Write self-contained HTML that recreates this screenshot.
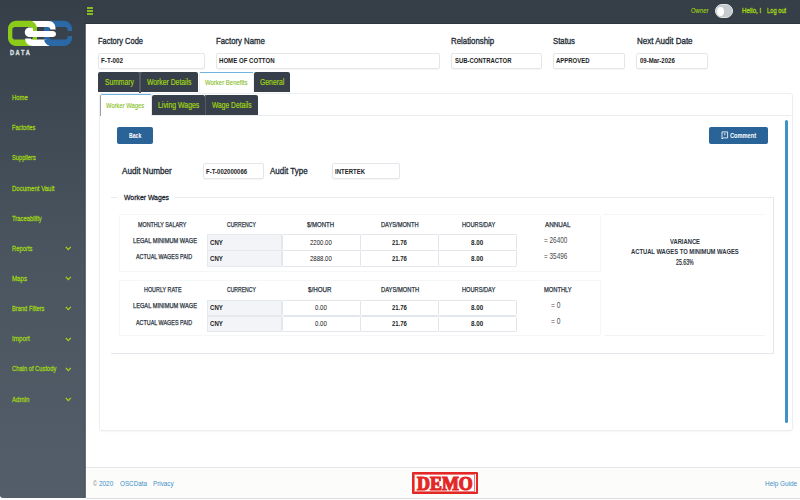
<!DOCTYPE html>
<html><head><meta charset="utf-8"><style>
html,body{margin:0;padding:0;width:800px;height:500px;overflow:hidden;background:#fff;position:relative}
.t{position:absolute;white-space:nowrap;line-height:1;font-family:"Liberation Sans",sans-serif;transform-origin:0 0}
</style></head><body>
<div style="position:absolute;left:0px;top:0px;width:86px;height:498px;box-sizing:border-box;background:linear-gradient(#363f48 0%,#3b4550 14%,#4a5560 52%,#535e6a 100%);border-right:1px solid #6a727a;border-bottom-left-radius:3px"></div>
<div style="position:absolute;left:84px;top:24px;width:1px;height:474px;box-sizing:border-box;background:rgba(0,0,0,0.07)"></div>
<div style="position:absolute;left:84px;top:0px;width:716px;height:24px;box-sizing:border-box;background:#363f48;border-bottom:1px solid #2e363e"></div>
<div style="position:absolute;left:86.8px;top:7.2px;width:6.400000000000006px;height:1.7000000000000002px;box-sizing:border-box;background:#86bb22"></div>
<div style="position:absolute;left:86.8px;top:10.3px;width:6.400000000000006px;height:1.6999999999999993px;box-sizing:border-box;background:#86bb22"></div>
<div style="position:absolute;left:86.8px;top:13.4px;width:6.400000000000006px;height:1.6999999999999993px;box-sizing:border-box;background:#86bb22"></div>
<svg style="position:absolute;left:0;top:0" width="86" height="60" viewBox="0 0 86 60">
<path fill-rule="evenodd" fill="#8dcb1a" d="M16 20.8 H29 C33.5 20.8 37 24.5 37 29 V37.8 C37 42.3 33.5 46 29 46 H16 C11.5 46 8 42.3 8 37.8 V29 C8 24.5 11.5 20.8 16 20.8 Z M15 27 H30.5 C32 27 33 28 33 29.5 V37 C33 38.5 32 39.6 30.5 39.6 H15 C13.5 39.6 12.3 38.5 12.3 37 V29.5 C12.3 28 13.5 27 15 27 Z"/>
<path fill-rule="evenodd" fill="#2a69a5" d="M52 20.8 H64 C68.5 20.8 72 24.5 72 29 V31 H67.6 V29.5 C67.6 28 66.6 27 65 27 H52 C50.5 27 49.5 28 49.5 29.5 V37 C49.5 38.5 50.5 39.6 52 39.6 H65 C66.6 39.6 67.6 38.5 67.6 37 V36 H72 V37.8 C72 42.3 68.5 46 64 46 H52 C47.5 46 44 42.3 44 37.8 V29 C44 24.5 47.5 20.8 52 20.8 Z"/>
<path fill="#ffffff" d="M30 27.4 H33 V31 H52.5 C54.6 31 56 32.2 56 34 C56 35.8 54.6 37 52.5 37 H30 C27 37 24.8 35 24.8 32.2 C24.8 29.4 27 27.4 30 27.4 Z"/>
<path fill="#ffffff" d="M32 21 H48.5 C53 21 55.6 24 55.6 29.4 H50.2 C50.2 27.8 49.4 27 47.6 27 H33.5 Z"/>
<path fill="#ffffff" d="M25.2 38.6 H30.8 C30.8 39.2 31.4 39.6 32.4 39.6 H46.5 L49.5 46 H33 C28.2 46 25.2 43.2 25.2 38.6 Z"/>
<path fill="#8dcb1a" d="M29 20.8 C30.5 20.8 31.5 21 32.2 21.3 C35 22.6 37 25.4 37 29 V31 H33 V29.5 C33 28 32 27 30.5 27 H29 Z"/>
<path fill="#8dcb1a" d="M33 37 V37.8 C33 38.8 32.6 39.4 32 39.6 H36.5 C36.9 38.8 37 38.2 37 37.8 V37 Z" opacity="0.9"/>
<path fill="#2a69a5" d="M44.3 39.6 H49.6 C50.2 40 51 40 52 40 V46 C48.8 46 46 44.5 44.5 41.5 Z"/>
</svg>
<div class="t" style="left:10.00px;top:49.33px;font-size:7.5px;font-weight:bold;color:#dfe2e4;transform:scaleX(0.754);-webkit-text-stroke:0.35px #dfe2e4;">D A T A</div>
<div class="t" style="left:690.50px;top:7.25px;font-size:8px;font-weight:normal;color:#a0d514;transform:scaleX(0.743);-webkit-text-stroke:0.12px #a0d514;">Owner</div>
<div style="position:absolute;left:714.6px;top:3.7px;width:18.299999999999955px;height:14.8px;box-sizing:border-box;background:#c6cbce;border:1px solid #e3e6e8;border-radius:7.5px"></div>
<div style="position:absolute;left:716.5px;top:6.5px;width:7.7000000000000455px;height:9.4px;box-sizing:border-box;background:#fff;border-radius:50%"></div>
<div class="t" style="left:741.80px;top:7.25px;font-size:8px;font-weight:normal;color:#a0d514;transform:scaleX(0.772);-webkit-text-stroke:0.35px #a0d514;">Hello, I</div>
<div class="t" style="left:767.00px;top:7.25px;font-size:8px;font-weight:normal;color:#a0d514;transform:scaleX(0.720);-webkit-text-stroke:0.35px #a0d514;">Log out</div>
<div class="t" style="left:11.60px;top:94.05px;font-size:8px;font-weight:normal;color:#a0d514;transform:scaleX(0.740);-webkit-text-stroke:0.28px #a0d514;">Home</div>
<div class="t" style="left:11.60px;top:124.20px;font-size:8px;font-weight:normal;color:#a0d514;transform:scaleX(0.706);-webkit-text-stroke:0.28px #a0d514;">Factories</div>
<div class="t" style="left:11.60px;top:154.35px;font-size:8px;font-weight:normal;color:#a0d514;transform:scaleX(0.713);-webkit-text-stroke:0.28px #a0d514;">Suppliers</div>
<div class="t" style="left:11.60px;top:184.50px;font-size:8px;font-weight:normal;color:#a0d514;transform:scaleX(0.753);-webkit-text-stroke:0.28px #a0d514;">Document Vault</div>
<div class="t" style="left:11.60px;top:214.65px;font-size:8px;font-weight:normal;color:#a0d514;transform:scaleX(0.732);-webkit-text-stroke:0.28px #a0d514;">Traceability</div>
<div class="t" style="left:11.60px;top:244.80px;font-size:8px;font-weight:normal;color:#a0d514;transform:scaleX(0.729);-webkit-text-stroke:0.28px #a0d514;">Reports</div>
<svg style="position:absolute;left:65px;top:246.05px" width="7" height="5" viewBox="0 0 7 5"><path d="M0.8 0.9 L3.3 3.6 L5.8 0.9" fill="none" stroke="#a0d514" stroke-width="1.3"/></svg>
<div class="t" style="left:11.60px;top:274.95px;font-size:8px;font-weight:normal;color:#a0d514;transform:scaleX(0.767);-webkit-text-stroke:0.28px #a0d514;">Maps</div>
<svg style="position:absolute;left:65px;top:276.20px" width="7" height="5" viewBox="0 0 7 5"><path d="M0.8 0.9 L3.3 3.6 L5.8 0.9" fill="none" stroke="#a0d514" stroke-width="1.3"/></svg>
<div class="t" style="left:11.60px;top:305.10px;font-size:8px;font-weight:normal;color:#a0d514;transform:scaleX(0.716);-webkit-text-stroke:0.28px #a0d514;">Brand Filters</div>
<svg style="position:absolute;left:65px;top:306.35px" width="7" height="5" viewBox="0 0 7 5"><path d="M0.8 0.9 L3.3 3.6 L5.8 0.9" fill="none" stroke="#a0d514" stroke-width="1.3"/></svg>
<div class="t" style="left:11.60px;top:335.25px;font-size:8px;font-weight:normal;color:#a0d514;transform:scaleX(0.785);-webkit-text-stroke:0.28px #a0d514;">Import</div>
<svg style="position:absolute;left:65px;top:336.50px" width="7" height="5" viewBox="0 0 7 5"><path d="M0.8 0.9 L3.3 3.6 L5.8 0.9" fill="none" stroke="#a0d514" stroke-width="1.3"/></svg>
<div class="t" style="left:11.60px;top:365.40px;font-size:8px;font-weight:normal;color:#a0d514;transform:scaleX(0.722);-webkit-text-stroke:0.28px #a0d514;">Chain of Custody</div>
<svg style="position:absolute;left:65px;top:366.65px" width="7" height="5" viewBox="0 0 7 5"><path d="M0.8 0.9 L3.3 3.6 L5.8 0.9" fill="none" stroke="#a0d514" stroke-width="1.3"/></svg>
<div class="t" style="left:11.60px;top:395.55px;font-size:8px;font-weight:normal;color:#a0d514;transform:scaleX(0.767);-webkit-text-stroke:0.28px #a0d514;">Admin</div>
<svg style="position:absolute;left:65px;top:396.80px" width="7" height="5" viewBox="0 0 7 5"><path d="M0.8 0.9 L3.3 3.6 L5.8 0.9" fill="none" stroke="#a0d514" stroke-width="1.3"/></svg>
<div class="t" style="left:98.40px;top:36.99px;font-size:9.3px;font-weight:normal;color:#212b35;transform:scaleX(0.806);-webkit-text-stroke:0.33px #212b35;">Factory Code</div>
<div class="t" style="left:216.00px;top:36.99px;font-size:9.3px;font-weight:normal;color:#212b35;transform:scaleX(0.837);-webkit-text-stroke:0.33px #212b35;">Factory Name</div>
<div class="t" style="left:451.30px;top:36.99px;font-size:9.3px;font-weight:normal;color:#212b35;transform:scaleX(0.844);-webkit-text-stroke:0.33px #212b35;">Relationship</div>
<div class="t" style="left:553.00px;top:36.99px;font-size:9.3px;font-weight:normal;color:#212b35;transform:scaleX(0.834);-webkit-text-stroke:0.33px #212b35;">Status</div>
<div class="t" style="left:636.90px;top:36.99px;font-size:9.3px;font-weight:normal;color:#212b35;transform:scaleX(0.860);-webkit-text-stroke:0.33px #212b35;">Next Audit Date</div>
<div style="position:absolute;left:98px;top:52.5px;width:107px;height:16.0px;box-sizing:border-box;background:#fff;border:1px solid #e3e6ea;border-radius:2px;box-shadow:0 1px 1px rgba(0,0,0,.04)"></div>
<div style="position:absolute;left:215.6px;top:52.5px;width:224.4px;height:16.0px;box-sizing:border-box;background:#fff;border:1px solid #e3e6ea;border-radius:2px;box-shadow:0 1px 1px rgba(0,0,0,.04)"></div>
<div style="position:absolute;left:451.3px;top:52.5px;width:90.49999999999994px;height:16.0px;box-sizing:border-box;background:#fff;border:1px solid #e3e6ea;border-radius:2px;box-shadow:0 1px 1px rgba(0,0,0,.04)"></div>
<div style="position:absolute;left:553.3px;top:52.5px;width:71.70000000000005px;height:16.0px;box-sizing:border-box;background:#fff;border:1px solid #e3e6ea;border-radius:2px;box-shadow:0 1px 1px rgba(0,0,0,.04)"></div>
<div style="position:absolute;left:636.3px;top:52.5px;width:72.0px;height:16.0px;box-sizing:border-box;background:#fff;border:1px solid #e3e6ea;border-radius:2px;box-shadow:0 1px 1px rgba(0,0,0,.04)"></div>
<div class="t" style="left:100.60px;top:57.05px;font-size:7px;font-weight:bold;color:#222;transform:scaleX(0.894);">F-T-002</div>
<div class="t" style="left:218.80px;top:57.05px;font-size:7px;font-weight:bold;color:#222;transform:scaleX(0.868);">HOME OF COTTON</div>
<div class="t" style="left:455.00px;top:57.05px;font-size:7px;font-weight:bold;color:#222;transform:scaleX(0.845);">SUB-CONTRACTOR</div>
<div class="t" style="left:556.00px;top:57.05px;font-size:7px;font-weight:bold;color:#222;transform:scaleX(0.852);">APPROVED</div>
<div class="t" style="left:639.80px;top:57.05px;font-size:7px;font-weight:bold;color:#222;transform:scaleX(0.858);">09-Mar-2026</div>
<div style="position:absolute;left:98px;top:72px;width:41.5px;height:20px;box-sizing:border-box;background:#37404a;border-radius:2px 2px 0 0"></div>
<div class="t" style="left:105.00px;top:78.00px;font-size:8.3px;font-weight:normal;color:#a0d514;transform:scaleX(0.811);-webkit-text-stroke:0.18px #a0d514;">Summary</div>
<div style="position:absolute;left:139.5px;top:72px;width:58.30000000000001px;height:20px;box-sizing:border-box;background:#37404a;border-radius:2px 2px 0 0"></div>
<div class="t" style="left:146.80px;top:78.00px;font-size:8.3px;font-weight:normal;color:#a0d514;transform:scaleX(0.820);-webkit-text-stroke:0.18px #a0d514;">Worker Details</div>
<div style="position:absolute;left:198.5px;top:72px;width:55.400000000000006px;height:21px;box-sizing:border-box;background:#fff;border-top:1.2px solid #6fb3de;border-left:1px solid #f0f2f4;border-right:1px solid #f0f2f4;border-radius:2px 2px 0 0"></div>
<div class="t" style="left:204.50px;top:78.65px;font-size:7.8px;font-weight:normal;color:#86be1a;transform:scaleX(0.768);-webkit-text-stroke:0.12px #86be1a;">Worker Benefits</div>
<div style="position:absolute;left:254.3px;top:72px;width:35.69999999999999px;height:20px;box-sizing:border-box;background:#37404a;border-radius:2px 2px 0 0"></div>
<div class="t" style="left:260.00px;top:78.00px;font-size:8.3px;font-weight:normal;color:#a0d514;transform:scaleX(0.822);-webkit-text-stroke:0.18px #a0d514;">General</div>
<div style="position:absolute;left:139.3px;top:72px;width:1.299999999999983px;height:20.5px;box-sizing:border-box;background:#555b62"></div>
<div style="position:absolute;left:99px;top:115px;width:692px;height:1px;box-sizing:border-box;background:#e9ecef"></div>
<div style="position:absolute;left:100px;top:94.3px;width:51.5px;height:21.700000000000003px;box-sizing:border-box;background:#fff;border-top:1px solid #6fb3de;border-left:1px solid #9aa0a6;border-right:1px solid #e6eaee;border-radius:2px 2px 0 0"></div>
<div class="t" style="left:106.30px;top:101.85px;font-size:7.8px;font-weight:normal;color:#86be1a;transform:scaleX(0.747);-webkit-text-stroke:0.12px #86be1a;">Worker Wages</div>
<div style="position:absolute;left:151.5px;top:95px;width:53.5px;height:20px;box-sizing:border-box;background:#37404a;border-radius:2px 2px 0 0"></div>
<div class="t" style="left:157.50px;top:100.39px;font-size:9.5px;font-weight:normal;color:#a0d514;transform:scaleX(0.729);-webkit-text-stroke:0.22px #a0d514;">Living Wages</div>
<div style="position:absolute;left:205px;top:95px;width:53px;height:20px;box-sizing:border-box;background:#37404a;border-radius:2px 2px 0 0"></div>
<div class="t" style="left:211.80px;top:100.39px;font-size:9.5px;font-weight:normal;color:#a0d514;transform:scaleX(0.704);-webkit-text-stroke:0.22px #a0d514;">Wage Details</div>
<div style="position:absolute;left:204.8px;top:95px;width:1.299999999999983px;height:20.299999999999997px;box-sizing:border-box;background:#555b62"></div>
<div style="position:absolute;left:98.5px;top:93px;width:694.0px;height:338px;box-sizing:border-box;border:1px solid #eceef1;border-radius:3px;box-shadow:0 1px 2px rgba(0,0,0,.04)"></div>
<div style="position:absolute;left:784.6px;top:119.5px;width:3.6000000000000227px;height:303.5px;box-sizing:border-box;background:#3e92c8;border-radius:2px"></div>
<div style="position:absolute;left:116.8px;top:127.1px;width:36.2px;height:16.900000000000006px;box-sizing:border-box;background:#2a6398;border-radius:2px"></div>
<div class="t" style="left:128.80px;top:132.01px;font-size:7.5px;font-weight:bold;color:#fff;transform:scaleX(0.685);">Back</div>
<div style="position:absolute;left:708.8px;top:127px;width:59.60000000000002px;height:16.80000000000001px;box-sizing:border-box;background:#2a6398;border-radius:2px"></div>
<div class="t" style="left:729.90px;top:132.01px;font-size:7.5px;font-weight:bold;color:#fff;transform:scaleX(0.755);">Comment</div>
<svg style="position:absolute;left:721px;top:131px" width="8" height="9" viewBox="0 0 8 9"><path d="M1 0.9 H6.6 V6.9 H2 L1 8 Z" fill="none" stroke="#fff" stroke-width="0.85"/><path d="M3.8 1.9 V4.3" stroke="#fff" stroke-width="0.9"/></svg>
<div class="t" style="left:122.20px;top:167.00px;font-size:9.3px;font-weight:normal;color:#212b35;transform:scaleX(0.874);-webkit-text-stroke:0.33px #212b35;">Audit Number</div>
<div class="t" style="left:270.00px;top:167.00px;font-size:9.3px;font-weight:normal;color:#212b35;transform:scaleX(0.859);-webkit-text-stroke:0.33px #212b35;">Audit Type</div>
<div style="position:absolute;left:203.3px;top:163.2px;width:60.39999999999998px;height:16.0px;box-sizing:border-box;background:#fff;border:1px solid #e3e6ea;border-radius:2px;box-shadow:0 1px 1px rgba(0,0,0,.04)"></div>
<div style="position:absolute;left:332.4px;top:163.2px;width:67.20000000000005px;height:16.0px;box-sizing:border-box;background:#fff;border:1px solid #e3e6ea;border-radius:2px;box-shadow:0 1px 1px rgba(0,0,0,.04)"></div>
<div class="t" style="left:206.00px;top:167.85px;font-size:7px;font-weight:bold;color:#222;transform:scaleX(0.860);">F-T-002000066</div>
<div class="t" style="left:335.00px;top:168.16px;font-size:7px;font-weight:bold;color:#222;transform:scaleX(0.857);">INTERTEK</div>
<div style="position:absolute;left:111px;top:197.3px;width:6px;height:1.1999999999999886px;box-sizing:border-box;background:#e6eaed"></div>
<div style="position:absolute;left:175px;top:197.3px;width:599px;height:1.1999999999999886px;box-sizing:border-box;background:#e6eaed"></div>
<div style="position:absolute;left:773px;top:197.5px;width:1px;height:156.5px;box-sizing:border-box;background:#e3e7eb"></div>
<div style="position:absolute;left:111px;top:353px;width:663px;height:1.1999999999999886px;box-sizing:border-box;background:#e3e7eb"></div>
<div class="t" style="left:123.50px;top:193.75px;font-size:8px;font-weight:normal;color:#1e2832;transform:scaleX(0.858);-webkit-text-stroke:0.3px #1e2832;">Worker Wages</div>
<div style="position:absolute;left:119px;top:214px;width:482px;height:57.5px;box-sizing:border-box;border:1px solid #f5f6f8;border-radius:2px"></div>
<div style="position:absolute;left:119px;top:279.5px;width:482px;height:56.0px;box-sizing:border-box;border:1px solid #f5f6f8;border-radius:2px"></div>
<div style="position:absolute;left:604.4px;top:214px;width:161.10000000000002px;height:121.5px;box-sizing:border-box;border-top:1px solid #f4f5f7;border-bottom:1px solid #f1f3f5"></div>
<div class="t" style="left:137.50px;top:221.26px;font-size:7px;font-weight:normal;color:#26313c;transform:scaleX(0.768);-webkit-text-stroke:0.25px #26313c;">MONTHLY SALARY</div>
<div class="t" style="left:226.80px;top:221.26px;font-size:7px;font-weight:normal;color:#26313c;transform:scaleX(0.726);-webkit-text-stroke:0.25px #26313c;">CURRENCY</div>
<div class="t" style="left:306.90px;top:221.26px;font-size:7px;font-weight:normal;color:#26313c;transform:scaleX(0.857);-webkit-text-stroke:0.25px #26313c;">$/MONTH</div>
<div class="t" style="left:380.70px;top:221.26px;font-size:7px;font-weight:normal;color:#26313c;transform:scaleX(0.814);-webkit-text-stroke:0.25px #26313c;">DAYS/MONTH</div>
<div class="t" style="left:462.00px;top:221.26px;font-size:7px;font-weight:normal;color:#26313c;transform:scaleX(0.808);-webkit-text-stroke:0.25px #26313c;">HOURS/DAY</div>
<div class="t" style="left:545.00px;top:221.26px;font-size:7px;font-weight:normal;color:#26313c;transform:scaleX(0.898);-webkit-text-stroke:0.25px #26313c;">ANNUAL</div>
<div class="t" style="left:143.50px;top:286.26px;font-size:7px;font-weight:normal;color:#26313c;transform:scaleX(0.771);-webkit-text-stroke:0.25px #26313c;">HOURLY RATE</div>
<div class="t" style="left:226.80px;top:286.26px;font-size:7px;font-weight:normal;color:#26313c;transform:scaleX(0.726);-webkit-text-stroke:0.25px #26313c;">CURRENCY</div>
<div class="t" style="left:308.20px;top:286.26px;font-size:7px;font-weight:normal;color:#26313c;transform:scaleX(0.884);-webkit-text-stroke:0.25px #26313c;">$/HOUR</div>
<div class="t" style="left:380.50px;top:286.26px;font-size:7px;font-weight:normal;color:#26313c;transform:scaleX(0.827);-webkit-text-stroke:0.25px #26313c;">DAYS/MONTH</div>
<div class="t" style="left:462.00px;top:286.26px;font-size:7px;font-weight:normal;color:#26313c;transform:scaleX(0.808);-webkit-text-stroke:0.25px #26313c;">HOURS/DAY</div>
<div class="t" style="left:544.00px;top:286.26px;font-size:7px;font-weight:normal;color:#26313c;transform:scaleX(0.822);-webkit-text-stroke:0.25px #26313c;">MONTHLY</div>
<div class="t" style="left:132.50px;top:236.86px;font-size:7px;font-weight:normal;color:#26313c;transform:scaleX(0.812);-webkit-text-stroke:0.25px #26313c;">LEGAL MINIMUM WAGE</div>
<div style="position:absolute;left:207px;top:234.2px;width:74.69999999999999px;height:16.400000000000006px;box-sizing:border-box;background:#f3f4f7;border:1px solid #e6e9ec"></div>
<div class="t" style="left:209.50px;top:238.65px;font-size:8px;font-weight:bold;color:#222;transform:scaleX(0.758);">CNY</div>
<div style="position:absolute;left:281.5px;top:234.2px;width:79.10000000000002px;height:16.400000000000006px;box-sizing:border-box;background:#fff;border:1px solid #e2e6ea;border-radius:1.5px"></div>
<div style="position:absolute;left:359.8px;top:234.2px;width:79.09999999999997px;height:16.400000000000006px;box-sizing:border-box;background:#fff;border:1px solid #e2e6ea;border-radius:1.5px"></div>
<div style="position:absolute;left:438.1px;top:234.2px;width:78.89999999999998px;height:16.400000000000006px;box-sizing:border-box;background:#fff;border:1px solid #e2e6ea;border-radius:1.5px"></div>
<div class="t" style="left:309.80px;top:238.71px;font-size:7.5px;font-weight:normal;color:#111;transform:scaleX(0.804);">2200.00</div>
<div class="t" style="left:391.75px;top:238.71px;font-size:7.5px;font-weight:bold;color:#222;transform:scaleX(0.793);">21.76</div>
<div class="t" style="left:471.25px;top:238.71px;font-size:7.5px;font-weight:bold;color:#222;transform:scaleX(0.829);">8.00</div>
<div class="t" style="left:543.60px;top:235.50px;font-size:8.7px;font-weight:normal;color:#4a4a4a;transform:scaleX(0.738);">= 26400</div>
<div class="t" style="left:136.40px;top:253.41px;font-size:7px;font-weight:normal;color:#26313c;transform:scaleX(0.771);-webkit-text-stroke:0.25px #26313c;">ACTUAL WAGES PAID</div>
<div style="position:absolute;left:207px;top:250.2px;width:74.69999999999999px;height:16.69999999999999px;box-sizing:border-box;background:#f3f4f7;border:1px solid #e6e9ec"></div>
<div class="t" style="left:209.50px;top:255.20px;font-size:8px;font-weight:bold;color:#222;transform:scaleX(0.758);">CNY</div>
<div style="position:absolute;left:281.5px;top:250.2px;width:79.10000000000002px;height:16.69999999999999px;box-sizing:border-box;background:#fff;border:1px solid #e2e6ea;border-radius:1.5px"></div>
<div style="position:absolute;left:359.8px;top:250.2px;width:79.09999999999997px;height:16.69999999999999px;box-sizing:border-box;background:#fff;border:1px solid #e2e6ea;border-radius:1.5px"></div>
<div style="position:absolute;left:438.1px;top:250.2px;width:78.89999999999998px;height:16.69999999999999px;box-sizing:border-box;background:#fff;border:1px solid #e2e6ea;border-radius:1.5px"></div>
<div class="t" style="left:309.80px;top:255.25px;font-size:7.5px;font-weight:normal;color:#111;transform:scaleX(0.804);">2888.00</div>
<div class="t" style="left:391.75px;top:255.25px;font-size:7.5px;font-weight:bold;color:#222;transform:scaleX(0.793);">21.76</div>
<div class="t" style="left:471.25px;top:255.25px;font-size:7.5px;font-weight:bold;color:#222;transform:scaleX(0.829);">8.00</div>
<div class="t" style="left:543.60px;top:252.05px;font-size:8.7px;font-weight:normal;color:#4a4a4a;transform:scaleX(0.738);">= 35496</div>
<div class="t" style="left:132.50px;top:302.16px;font-size:7px;font-weight:normal;color:#26313c;transform:scaleX(0.812);-webkit-text-stroke:0.25px #26313c;">LEGAL MINIMUM WAGE</div>
<div style="position:absolute;left:207px;top:299.5px;width:74.69999999999999px;height:16.399999999999977px;box-sizing:border-box;background:#f3f4f7;border:1px solid #e6e9ec"></div>
<div class="t" style="left:209.50px;top:303.95px;font-size:8px;font-weight:bold;color:#222;transform:scaleX(0.758);">CNY</div>
<div style="position:absolute;left:281.5px;top:299.5px;width:79.10000000000002px;height:16.399999999999977px;box-sizing:border-box;background:#fff;border:1px solid #e2e6ea;border-radius:1.5px"></div>
<div style="position:absolute;left:359.8px;top:299.5px;width:79.09999999999997px;height:16.399999999999977px;box-sizing:border-box;background:#fff;border:1px solid #e2e6ea;border-radius:1.5px"></div>
<div style="position:absolute;left:438.1px;top:299.5px;width:78.89999999999998px;height:16.399999999999977px;box-sizing:border-box;background:#fff;border:1px solid #e2e6ea;border-radius:1.5px"></div>
<div class="t" style="left:314.75px;top:304.00px;font-size:7.5px;font-weight:normal;color:#111;transform:scaleX(0.816);">0.00</div>
<div class="t" style="left:391.75px;top:304.00px;font-size:7.5px;font-weight:bold;color:#222;transform:scaleX(0.793);">21.76</div>
<div class="t" style="left:471.25px;top:304.00px;font-size:7.5px;font-weight:bold;color:#222;transform:scaleX(0.829);">8.00</div>
<div class="t" style="left:550.60px;top:300.80px;font-size:8.7px;font-weight:normal;color:#4a4a4a;transform:scaleX(0.761);">= 0</div>
<div class="t" style="left:136.40px;top:318.56px;font-size:7px;font-weight:normal;color:#26313c;transform:scaleX(0.771);-webkit-text-stroke:0.25px #26313c;">ACTUAL WAGES PAID</div>
<div style="position:absolute;left:207px;top:315.5px;width:74.69999999999999px;height:16.399999999999977px;box-sizing:border-box;background:#f3f4f7;border:1px solid #e6e9ec"></div>
<div class="t" style="left:209.50px;top:320.35px;font-size:8px;font-weight:bold;color:#222;transform:scaleX(0.758);">CNY</div>
<div style="position:absolute;left:281.5px;top:315.5px;width:79.10000000000002px;height:16.399999999999977px;box-sizing:border-box;background:#fff;border:1px solid #e2e6ea;border-radius:1.5px"></div>
<div style="position:absolute;left:359.8px;top:315.5px;width:79.09999999999997px;height:16.399999999999977px;box-sizing:border-box;background:#fff;border:1px solid #e2e6ea;border-radius:1.5px"></div>
<div style="position:absolute;left:438.1px;top:315.5px;width:78.89999999999998px;height:16.399999999999977px;box-sizing:border-box;background:#fff;border:1px solid #e2e6ea;border-radius:1.5px"></div>
<div class="t" style="left:314.75px;top:320.40px;font-size:7.5px;font-weight:normal;color:#111;transform:scaleX(0.816);">0.00</div>
<div class="t" style="left:391.75px;top:320.40px;font-size:7.5px;font-weight:bold;color:#222;transform:scaleX(0.793);">21.76</div>
<div class="t" style="left:471.25px;top:320.40px;font-size:7.5px;font-weight:bold;color:#222;transform:scaleX(0.829);">8.00</div>
<div class="t" style="left:550.60px;top:317.20px;font-size:8.7px;font-weight:normal;color:#4a4a4a;transform:scaleX(0.761);">= 0</div>
<div class="t" style="left:670.00px;top:238.21px;font-size:7.5px;font-weight:bold;color:#2b333b;transform:scaleX(0.777);">VARIANCE</div>
<div class="t" style="left:631.30px;top:247.86px;font-size:7px;font-weight:bold;color:#2b333b;transform:scaleX(0.831);">ACTUAL WAGES TO MINIMUM WAGES</div>
<div class="t" style="left:676.00px;top:258.75px;font-size:8.2px;font-weight:normal;color:#1e252c;transform:scaleX(0.637);-webkit-text-stroke:0.2px #1e252c;">25.63%</div>
<div style="position:absolute;left:86px;top:467px;width:714px;height:32px;box-sizing:border-box;background:#fcfcfb;border-top:1px solid #e4e8ec;border-bottom:1px solid #d9dde1"></div>
<div class="t" style="left:93.00px;top:479.55px;font-size:8px;font-weight:normal;color:#777;transform:scaleX(0.680);">©</div>
<div class="t" style="left:99.40px;top:479.55px;font-size:8px;font-weight:normal;color:#3d8fc6;transform:scaleX(0.798);">2020</div>
<div class="t" style="left:120.00px;top:479.55px;font-size:8px;font-weight:normal;color:#3d8fc6;transform:scaleX(0.788);">OSCData</div>
<div class="t" style="left:153.00px;top:479.55px;font-size:8px;font-weight:normal;color:#3d8fc6;transform:scaleX(0.785);">Privacy</div>
<div class="t" style="left:764.80px;top:479.55px;font-size:8px;font-weight:normal;color:#3d8fc6;transform:scaleX(0.802);">Help Guide</div>
<div style="position:absolute;left:411.5px;top:471.8px;width:66.5px;height:22.399999999999977px;box-sizing:border-box;border:2px solid #e32626;border-radius:1px"></div>
<div style="position:absolute;left:414.2px;top:474.2px;width:61.10000000000002px;height:17.600000000000023px;box-sizing:border-box;border:0.7px solid rgba(227,38,38,0.6)"></div>
<div class="t" style="left:416.80px;top:473.69px;font-family:'Liberation Serif',serif;font-size:19px;font-weight:bold;color:#e32626;transform:scaleX(0.943);-webkit-text-stroke:1.2px #e32626">DEMO</div>
</body></html>
